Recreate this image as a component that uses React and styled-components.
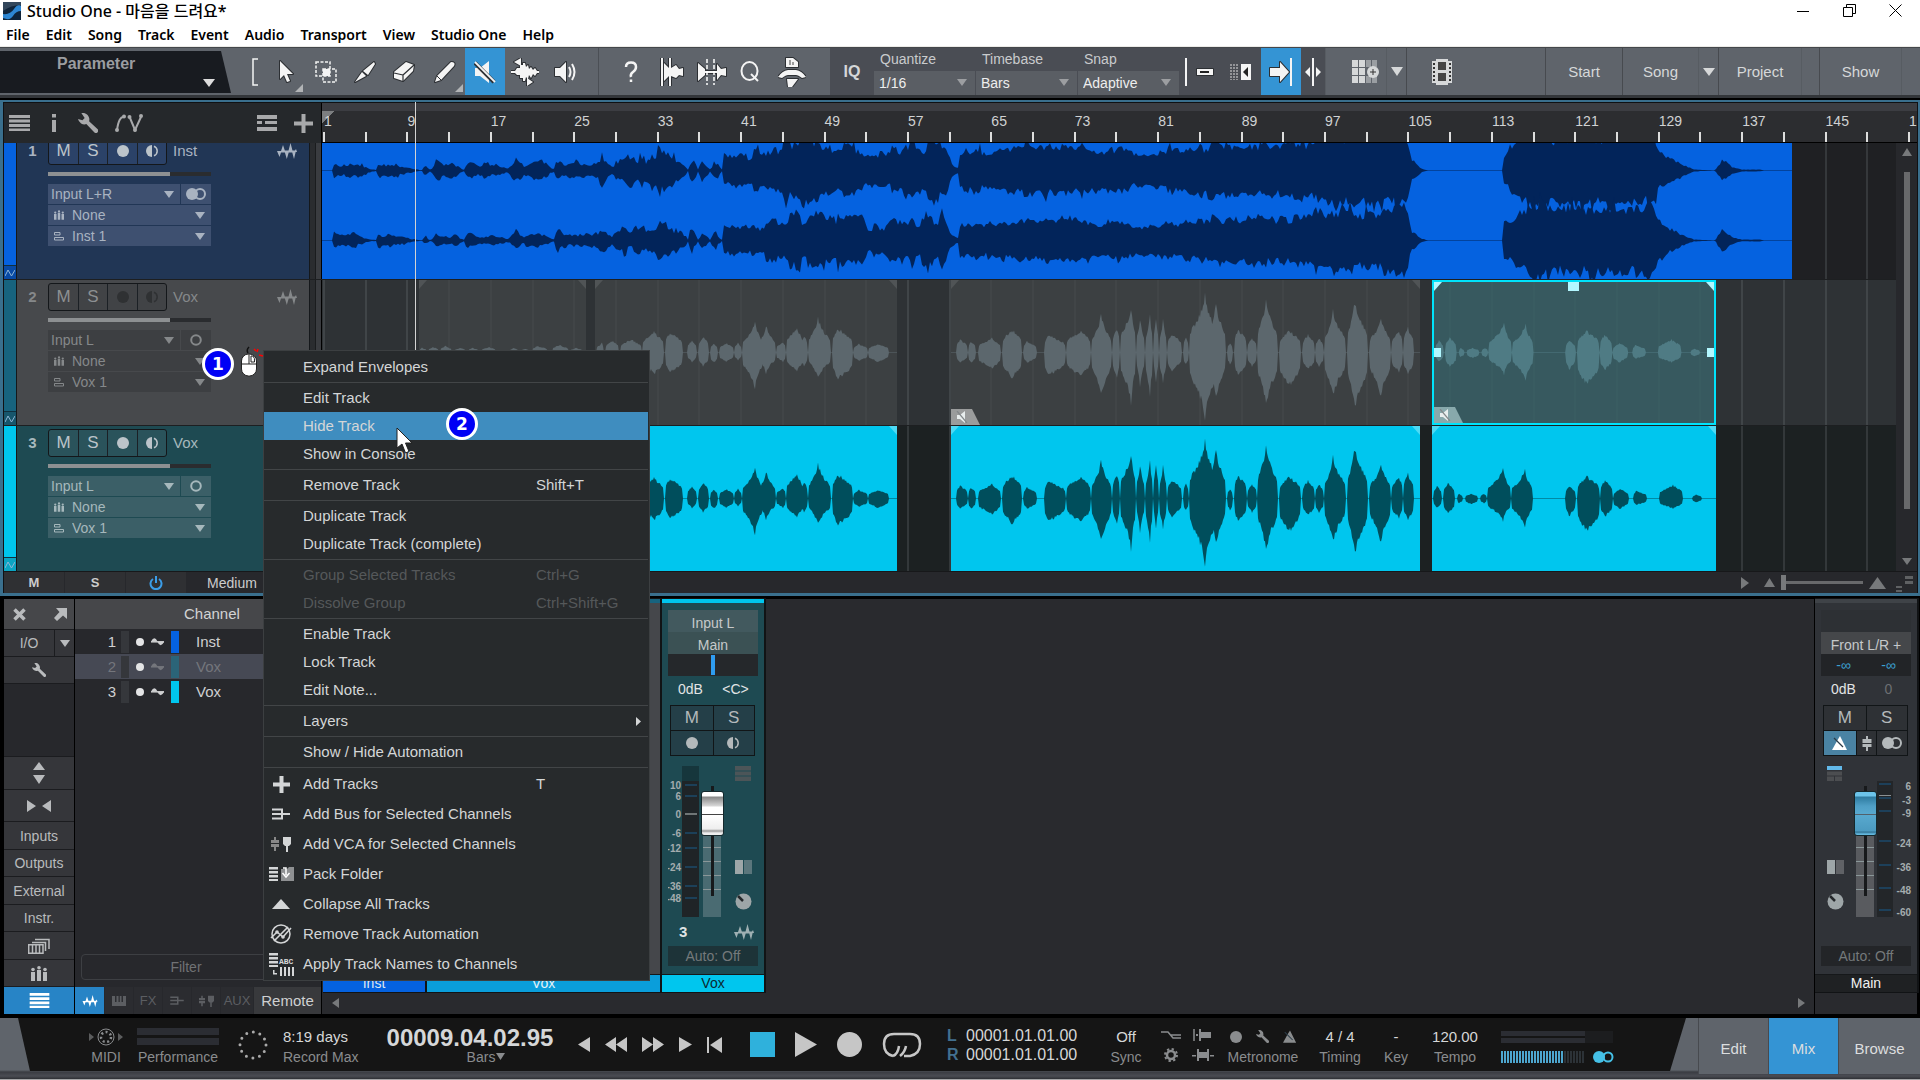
import styled, { createGlobalStyle, css } from 'styled-components'

const GlobalStyle = createGlobalStyle`
  *, *::before, *::after { box-sizing: border-box; }
  body {
    margin: 0;
    background: #000;
    color: #c9cbcc;
    font-family: "Liberation Sans", Arial, sans-serif;
    font-size: 14px;
    line-height: 16px;
  }
  button, input, select {
    font: inherit;
    color: inherit;
    margin: 0;
    padding: 0;
    border: 0;
    border-radius: 0;
    background: transparent;
    appearance: none;
    outline: none;
  }
  button { display: flex; align-items: center; justify-content: center; }
  svg { display: block; flex: none; }
`

/* ---------- waveforms ---------- */

const randomFrom = (seed) => {
  let s = seed
  return () => {
    s = (s * 16807) % 2147483647
    return s / 2147483647
  }
}

const toPath = (top, bottom) =>
  'M' + top.map((p) => p.join(' ')).join('L') + 'L' + bottom.reverse().map((p) => p.join(' ')).join('L') + 'Z'

// [x, height] envelope of the stereo instrumental
const INST = [
  [0, 0], [10, 0], [11, 11], [20, 8], [34, 9], [50, 1], [55, 1], [56, 9], [74, 6], [92, 2], [99, 0], [101, 1], [103, 8], [107, 1],
  [110, 2], [114, 12], [122, 6], [131, 8], [142, 1], [145, 9], [156, 6], [171, 8], [187, 2], [194, 15], [202, 6], [215, 12],
  [232, 2], [235, 13], [253, 8], [276, 9], [281, 18], [289, 5], [304, 16], [325, 15], [330, 25], [350, 20], [365, 4], [366, 1],
  [369, 17], [376, 1], [380, 12], [388, 1], [393, 13], [400, 1], [402, 21], [413, 14], [414, 18], [432, 20], [457, 26], [467, 32],
  [508, 32], [539, 28], [546, 16], [575, 26], [600, 27], [620, 35], [628, 12], [636, 3], [638, 20], [677, 21], [687, 25], [763, 24],
  [779, 19], [798, 24], [813, 17], [859, 22], [890, 28], [990, 30], [994, 36], [1084, 37], [1086, 30], [1089, 12], [1099, 2],
  [1106, 0], [1181, 0], [1182, 16], [1201, 33], [1206, 37], [1331, 37], [1336, 22], [1359, 7], [1372, 1], [1393, 0], [1400, 12],
  [1410, 4], [1420, 1], [1438, 1], [1442, 0], [1470, 0],
]

const instPath = (center, scale, seed) => {
  const rnd = randomFrom(seed)
  const top = []
  const bottom = []
  let k = 0
  let swell = 1
  for (let x = 0; x <= 1470; x += 2) {
    while (k < INST.length - 2 && INST[k + 1][0] < x) k++
    const [x0, a0] = INST[k]
    const [x1, a1] = INST[k + 1]
    if (x % 6 === 0) swell = (x < 640 ? 0.65 : 0.86) + (x < 640 ? 0.55 : 0.24) * rnd()
    const amp = (a0 + ((a1 - a0) * (x - x0)) / (x1 - x0)) * (x < 1060 ? scale : 1) * swell
    const floor = x < 400 ? 0.6 : 0.76
    const spike = () => floor + (1.06 - floor) * rnd() + (rnd() > 0.94 ? 0.2 : 0)
    top.push([x, (center - amp * spike()).toFixed(1)])
    bottom.push([x, (center + amp * spike()).toFixed(1)])
  }
  return toPath(top, bottom)
}

// every phrase is [start, peak, end, height above, height below]
const VOX_A = [
  [0, 3, 8, 5, 5], [9, 14, 20, 6, 6], [21, 26, 33, 7, 6], [35, 41, 47, 5, 5], [49, 54, 60, 5, 4], [62, 70, 77, 6, 5],
  [90, 95, 100, 5, 5], [101, 106, 111, 4, 4], [113, 118, 129, 7, 7], [133, 140, 150, 8, 7], [151, 157, 164, 5, 5],
]
const VOX_B = [
  [1, 7, 9, 10, 10], [10, 18, 24, 13, 12], [25, 36, 47, 14, 13], [47, 59, 69, 22, 23], [70, 75, 88, 22, 22], [92, 97, 102, 13, 10],
  [103, 108, 114, 17, 15], [115, 119, 123, 10, 11], [124, 131, 139, 10, 10], [139, 143, 147, 10, 8], [147, 160, 168, 33, 38],
  [163, 171, 181, 29, 22], [181, 188, 191, 11, 10], [191, 202, 208, 26, 20], [204, 209, 213, 18, 14], [213, 223, 236, 37, 28],
  [237, 243, 258, 26, 29], [258, 264, 273, 9, 9], [273, 283, 294, 9, 10],
]
const VOX_C = [
  [5, 9, 17, 14, 11], [17, 20, 25, 12, 11], [27, 41, 50, 15, 17], [51, 61, 71, 25, 27], [72, 76, 86, 12, 11], [93, 97, 115, 19, 25],
  [115, 130, 140, 24, 26], [140, 150, 161, 39, 47], [161, 166, 169, 26, 26], [169, 180, 185, 50, 54], [185, 189, 194, 38, 35],
  [194, 199, 202, 42, 47], [202, 205, 208, 39, 32], [208, 212, 216, 37, 35], [216, 221, 231, 20, 20], [232, 235, 238, 16, 13],
  [238, 254, 268, 60, 69], [258, 265, 275, 54, 50], [276, 279, 282, 10, 13], [283, 287, 296, 25, 25], [296, 301, 306, 15, 15],
  [306, 315, 327, 57, 57], [328, 338, 350, 24, 36], [351, 357, 364, 19, 18], [364, 368, 373, 15, 15], [373, 382, 395, 44, 48],
  [396, 404, 417, 56, 63], [418, 430, 440, 38, 48], [440, 448, 452, 23, 21], [452, 457, 463, 26, 23],
]
const VOX_D = [
  [1, 5, 10, 13, 10], [11, 16, 23, 17, 16], [25, 27, 31, 5, 5], [33, 39, 46, 5, 6], [48, 52, 55, 5, 5], [55, 71, 79, 31, 24],
  [79, 93, 101, 31, 31], [133, 137, 144, 13, 19], [145, 155, 168, 24, 36], [168, 173, 181, 20, 20], [181, 188, 197, 10, 11],
  [201, 204, 215, 8, 7], [227, 241, 251, 14, 11], [260, 264, 270, 4, 4],
]

const voxPath = (phrases, center, seed) => {
  const rnd = randomFrom(seed)
  return phrases
    .map(([start, peak, end, up, down]) => {
      const top = []
      const bottom = []
      const body = up > 28 ? 0.6 : 0.85
      for (let x = start; x <= end; x++) {
        const t = x < peak ? (x - start) / (peak - start) : (end - x) / (end - peak)
        const amp = body * Math.pow(t, 0.22) + (1 - body) * t * t * t
        top.push([x, (center - up * amp * (0.84 + 0.16 * rnd())).toFixed(1)])
        bottom.push([x, (center + down * amp * (0.84 + 0.16 * rnd())).toFixed(1)])
      }
      return toPath(top, bottom)
    })
    .join('')
}

/* ---------- icons ---------- */

const Icon = ({ w = 20, h = 20, box, ...rest }) => (
  <svg width={w} height={h} viewBox={box || `0 0 ${w} ${h}`} fill="currentColor" aria-hidden="true" {...rest} />
)
const line = { fill: 'none', stroke: 'currentColor', strokeWidth: 2 }
const edge = { stroke: '#2c2f33', strokeWidth: 2, paintOrder: 'stroke', strokeLinejoin: 'round' }

const Down = ({ w = 10, h = 7 }) => <Icon w={w} h={h}><path d={`M0 0H${w}L${w / 2} ${h}Z`} /></Icon>
const Up = ({ w = 12, h = 8 }) => <Icon w={w} h={h}><path d={`M0 ${h}H${w}L${w / 2} 0Z`} /></Icon>
const Right = ({ w = 8, h = 12 }) => <Icon w={w} h={h}><path d={`M0 0V${h}L${w} ${h / 2}Z`} /></Icon>
const Left = ({ w = 8, h = 12 }) => <Icon w={w} h={h}><path d={`M${w} 0V${h}L0 ${h / 2}Z`} /></Icon>
const Lines = ({ w = 21, h = 16 }) => (
  <Icon w={w} h={h} box="0 0 21 16"><path d="M0 0H21V3H0ZM0 4.500H21V7.500H0ZM0 9H21V12H0ZM0 13.500H21V16H0Z" /></Icon>
)
const Wrench = ({ s = 18 }) => (
  <Icon w={s} h={s} box="0 0 18 18"><path d="M3 0A6 6 0 0 1 10 7.500L17.500 14.500A1.800 1.800 0 0 1 14.800 17.500L7.500 10A6 6 0 0 1 0 5.500L4 6.500L6 4.500Z" /></Icon>
)
const Wave = ({ w = 20, h = 16 }) => (
  <Icon w={w} h={h} box="0 0 20 16"><path d="M0 8H4.500L2.500 14ZM3.500 9.500L6 2L8.500 9.500ZM7.300 7.500H12.300L9.800 16ZM11 9.500L13.500 0L16 9.500ZM14.700 7.500H19L17 16ZM17 9L19 6L20 9Z" /></Icon>
)
const Zig = () => <Icon w={10} h={8}><path d="M0 7L3 1L6.500 7L10 1" fill="none" stroke="currentColor" /></Icon>
const Dot = ({ s = 12 }) => <Icon w={s} h={s}><circle cx={s / 2} cy={s / 2} r={s / 2} /></Icon>
const Monitor = () => (
  <Icon w={13} h={12}><path d="M6 0V12A6 6 0 0 1 6 0Z" /><path d="M8 1.200A5.200 5.200 0 0 1 8 10.800" fill="none" stroke="currentColor" strokeWidth="1.500" /></Icon>
)
const Stereo = ({ w = 20, h = 12 }) => (
  <Icon w={w} h={h} box="0 0 20 12"><circle cx="6" cy="6" r="6" /><circle cx="14" cy="6" r="5" {...line} /></Icon>
)
const Mono = () => <Icon w={12} h={12}><circle cx="6" cy="6" r="4.800" {...line} /></Icon>
const Pins = ({ w = 10, h = 10 }) => (
  <Icon w={w} h={h} box="0 0 16 15">
    <path d="M0 6H4V15H0ZM6 4H10V15H6ZM12 6H16V15H12Z" /><circle cx="2" cy="3.500" r="1.800" /><circle cx="8" cy="1.800" r="1.800" /><circle cx="14" cy="3.500" r="1.800" />
  </Icon>
)
const Layers = () => <Icon w={10} h={9}><path d="M.5.5H6V3H.5ZM.5 5.500H9.500V8H.5Z" fill="none" stroke="currentColor" /></Icon>
const Bus = ({ w = 18, h = 12 }) => <Icon w={w} h={h} box="0 0 18 12"><path d="M0 1.500H10V10.500H0M0 6H18" {...line} /></Icon>
const Vca = ({ w = 20, h = 16, dim = '#888' }) => (
  <Icon w={w} h={h} box="0 0 20 16">
    <path d="M3 1H5V4H8V7H0V4H3ZM0 8H8V11H5V15H3V11H0Z" fill={dim} />
    <path d="M12 1H20V8L18 10H17V16H15V10H14L12 8Z" />
  </Icon>
)
const FaderIcon = () => <Icon w={10} h={15}><path d="M4 0H6V3H9.500V7H.5V3H4ZM.5 8H9.500V11H6V15H4V11H.5Z" /></Icon>
const Keys = () => <Icon w={14} h={10}><path d="M0 0H3V6H4.500V0H6.500V6H7.800V0H9.500V6H11V0H14V10H0Z" /></Icon>
const MutedSpeaker = ({ w = 22, h = 24 }) => (
  <Icon w={w} h={h} box="0 0 22 24"><path d="M1 8H6L15 1V23L6 16H1Z" /><path d="M1 3L20 22" stroke="#2c2f33" strokeWidth="4" /><path d="M1 2L21 22" stroke="currentColor" strokeWidth="1.800" /></Icon>
)
const MutedMark = () => <Icon w={13} h={12}><path d="M1 4H4L9 0V12L4 8H1Z" /><path d="M1 0L11 12" stroke="#83888a" strokeWidth="1.200" /></Icon>
const Sine = () => <Icon w={13} h={8}><path d="M0 3.500Q3.500-3 6.500 3.500ZM6.500 4Q9.500 10.500 13 4Z" /><path d="M0 3.800H13" stroke="currentColor" strokeWidth="1.500" /></Icon>
const Panes = ({ dim }) => <Icon w={17} h={14}><path d="M0 0H8V14H0Z" /><path d="M9 0H17V14H9Z" fill={dim} /></Icon>
const Knob = () => <Icon w={17} h={17}><circle cx="8.500" cy="8.500" r="8" /><path d="M3 3L8 8" stroke="#25282b" strokeWidth="2.500" /></Icon>
const MetronomeIcon = ({ w = 16, h = 14 }) => (
  <Icon w={w} h={h} box="0 0 16 14"><path d="M8 0L15 14H0L5 5Z" /><path d="M2 2L11 11" stroke="#2b3c48" strokeWidth="1.200" /></Icon>
)

/* ---------- window frame ---------- */

const Page = styled.div`
  position: relative;
  display: flex;
  flex-direction: column;
  min-height: 100vh;
  overflow: hidden;
`
const TitleBar = styled.header`
  display: flex;
  align-items: center;
  height: 21px;
  padding: 0 2px 0 3px;
  background: #fff;
  color: #000;
  font-family: "Noto Sans", "Noto Sans CJK KR", sans-serif;
  font-size: 16px;
  font-weight: 500;
`
const Title = styled.h1`
  margin: 0 0 0 6px;
  flex: 1;
  font: inherit;
`
const WindowButton = styled.button`
  width: 46px;
  height: 20px;
`
const MenuBar = styled.nav`
  display: flex;
  gap: 16px;
  height: 26px;
  padding: 5px 7px 0 6px;
  border-bottom: 1px solid #ecebe8;
  background: #fff;
  color: #000;
  font-family: "Noto Sans", "Open Sans", sans-serif;
  font-size: 14px;
  font-weight: 600;
`
const MenuButton = styled.button`
  height: 18px;
  line-height: 18px;
`

/* ---------- toolbar ---------- */

const Toolbar = styled.div`
  display: flex;
  height: 51px;
  border-top: 1px solid #44474b;
  border-bottom: 3px solid #33363a;
  background: #5f646b;
  color: #f4f4f4;
`
const ParameterBox = styled.div`
  display: grid;
  width: 231px;
  height: 42px;
  margin: 3px 16px 0 0;
  padding: 5px 16px 0 57px;
  background: #181b20;
  clip-path: polygon(0 0, 221px 0, 231px 100%, 0 100%);
  color: #9b9da0;
  font-size: 16px;
  font-weight: bold;
  svg { justify-self: end; color: #ddd; }
`
const Tool = styled.button`
  position: relative;
  width: ${(p) => p.$w || 40}px;
  background: ${(p) => (p.$on ? '#3494d4' : 'transparent')};
  &::after {
    content: "";
    display: ${(p) => (p.$more ? 'block' : 'none')};
    position: absolute;
    right: 2px;
    bottom: 3px;
    border: 4px solid;
    border-color: transparent #b2b4b6 #b2b4b6 transparent;
  }
`
const Gap = styled.i`
  width: ${(p) => p.$w}px;
  border-right: ${(p) => (p.$line ? '1px solid #4b4f55' : '0')};
`
const DarkGroup = styled.div`
  display: flex;
  background: #4a4d54;
`
const SelectField = styled.label`
  position: relative;
  display: grid;
  grid-template-rows: 23px 24px;
  width: 102px;
  border-right: 1px solid #4a4d54;
  color: #c9cbcd;
  span { padding: 3px 6px; }
  select { padding: 0 5px; background: #5a5e64; color: #eee; }
  svg { position: absolute; right: 8px; bottom: 9px; color: #9c9ea1; }
`
const PageButtons = styled.div`
  display: flex;
  flex: 1;
  justify-content: flex-end;
`
const PageButton = styled.button`
  width: ${(p) => p.$w}px;
  padding: 0 ${(p) => p.$right || 0}px 0 ${(p) => p.$left || 0}px;
  border-left: 1px solid ${(p) => (p.$soft ? '#575c62' : '#474a4f')};
  color: #d6d8d9;
  font-size: 15px;
`

/* ---------- arrangement ---------- */

const Arrange = styled.main`
  position: relative;
  margin-top: 2px;
  padding: 1px 1px 0;
  border: 2px solid #3a6f8d;
  border-width: 2px 2px 3px 3px;
  background: #101113;
`
const Split = styled.div`
  display: grid;
  grid-template-columns: 318px minmax(0, 1fr);
`
const ListTools = styled.div`
  display: flex;
  align-items: center;
  height: 40px;
  padding: 0 8px 0 5px;
  border-right: 1px solid #000;
  background: #25282b;
  color: #a8a9ab;
  button { margin-right: 17px; }
  button:last-child { margin-right: 0; }
`
const Spacer = styled.i`
  flex: ${(p) => (p.$w ? `0 0 ${p.$w}px` : 1)};
`
const ruled = css`
  display: grid;
  grid-template-columns: repeat(38, minmax(0, 1fr)) 9px;
  padding-left: 1px;
`
const Ruler = styled.div`
  ${ruled}
  height: 40px;
  overflow: hidden;
  border-top: 8px solid #3c3d42;
  border-bottom: 1px solid #000;
  background: linear-gradient(135deg, #7c7e80 9px, transparent 9px) no-repeat #2c2d30;
`
const Bar = styled.div`
  padding: 2px 0 0 1px;
  background: linear-gradient(#ddd, #ddd) no-repeat 0 100% / 2px 10px;
  color: #d0d2d3;
  white-space: nowrap;
`
const Tracks = styled.div`
  position: relative;
  display: grid;
  grid-template-columns: minmax(0, 1fr) 21px;
  height: 428px;
  overflow: hidden;
`
const TrackList = styled.div`
  margin-top: -9px;
`
const tones = {
  blue: { strip: '#0562e0', end: '#084aa5', body: '#213655', field: '#3e5070', button: '#2b4268', lane: '#1f2023', text: '#a9b3c1' },
  gray: { strip: '#17637e', end: '#17566c', body: '#47494c', field: '#3d3f42', button: '#414346', lane: '#2e3235', text: '#85888a', off: true },
  cyan: { strip: '#00c6ee', end: '#0ba5c3', body: '#1e4a52', field: '#3b5f67', button: '#2a535b', lane: '#1c2122', text: '#a6b8bc' },
}
const Track = styled.section`
  display: grid;
  grid-template-columns: 12px 294px 12px minmax(0, 1fr);
  height: 146px;
  border-bottom: 1px solid #1d1f21;
`
const ColorStrip = styled.div`
  display: flex;
  flex-direction: column;
  justify-content: flex-end;
  background: ${(p) => p.$tone.strip};
  color: #8fb6d6;
  button {
    height: 14px;
    border-top: 1px solid #10303f;
    background: ${(p) => p.$tone.end};
  }
`
const TrackHead = styled.div`
  display: grid;
  grid-template-columns: 31px 163px 1fr;
  grid-template-rows: 28px 18px auto;
  padding-top: 3px;
  border: 1px solid #15181b;
  border-width: 0 1px;
  background: ${(p) => p.$tone.body};
  color: ${(p) => p.$tone.text};
`
const TrackNumber = styled.b`
  align-self: center;
  justify-self: center;
  font-size: 15px;
`
const TrackButtons = styled.div`
  display: grid;
  grid-template-columns: 29px 29px 30px 29px;
  width: 119px;
  height: 28px;
  border: 1px solid #14171a;
  border-radius: 3px;
  background: ${(p) => p.$tone.button};
  color: ${(p) => (p.$tone.off ? '#8d9092' : '#bcc4ca')};
  button { font-size: 17px; line-height: 14px; }
  button + button { border-left: 1px solid #1b2025; }
  button:nth-child(n + 3) { color: ${(p) => (p.$tone.off ? '#2f3133' : '#bcc4ca')}; }
`
const TitleCell = styled.div`
  display: flex;
  align-items: center;
  justify-content: space-between;
  margin-left: -38px;
  padding-right: 12px;
  font-size: 15px;
`
const Volume = styled.input`
  grid-column: 2;
  align-self: center;
  width: 163px;
  height: 4px;
  background: linear-gradient(90deg, #8d9092 75%, #2a2c2f 75%);
  &::-webkit-slider-thumb { appearance: none; width: 0; height: 4px; }
`
const Fields = styled.div`
  grid-column: 2;
  display: grid;
  gap: 1px;
  align-content: start;
  padding-top: 1px;
`
const Field = styled.label`
  position: relative;
  display: flex;
  align-items: center;
  gap: 8px;
  height: 20px;
  padding-left: ${(p) => (p.$icon ? 6 : 3)}px;
  background: ${(p) => p.$tone.field};
  select { flex: 1; min-width: 0; }
  > svg:last-child { position: absolute; right: 6px; }
`
const InputRow = styled.div`
  display: grid;
  grid-template-columns: 132px 30px;
  gap: 1px;
  button { background: ${(p) => p.$tone.field}; }
`
const Gutter = styled.div`
  border-right: 1px solid #000;
  background: linear-gradient(90deg, #2a2c2f 5px, #1a1c1e 5px, #1a1c1e 6px, #3a3c40 6px);
`
const Lane = styled.div`
  position: relative;
  display: grid;
  grid-template-columns: ${(p) => p.$columns};
  overflow: hidden;
  background: ${(p) => p.$tone.lane};
`
const GridLines = styled.div`
  ${ruled}
  position: absolute;
  inset: 0 -21px 0 0;
  i { border-left: 2px solid rgba(120, 126, 130, 0.25); }
`
const Clip = styled.div`
  position: relative;
  overflow: hidden;
  grid-column: ${(p) => p.$column};
  border: ${(p) => (p.$selected ? '2px solid #00e3fb' : '0')};
  background: ${(p) => p.$bg};
  color: ${(p) => p.$wave};
  > svg:first-child { width: 100%; height: 100%; }
`
const Corner = styled.i`
  position: absolute;
  top: 0;
  ${(p) => p.$side}: 0;
  border-top: 9px solid ${(p) => p.$color};
  border-${(p) => (p.$side === 'left' ? 'right' : 'left')}: 8px solid transparent;
`
const Handle = styled.i`
  position: absolute;
  width: ${(p) => (p.$at === 'top' ? 11 : 7)}px;
  height: 9px;
  background: #b3f7ff;
  ${(p) => (p.$at === 'top' ? 'top: 0; left: calc(50% - 6px);' : `top: calc(50% - 5px); ${p.$at}: 0;`)}
`
const MuteFlag = styled.div`
  position: absolute;
  left: 0;
  bottom: 0;
  display: flex;
  align-items: center;
  width: 29px;
  height: 16px;
  padding-left: 5px;
  background: ${(p) => p.$bg};
  clip-path: polygon(0 0, 21px 0, 100% 100%, 0 100%);
  color: #e8eeee;
`
const Playhead = styled.div`
  position: absolute;
  top: 0;
  bottom: 0;
  left: 412px;
  width: 1px;
  background: #d3d3d3;
`
const ScrollColumn = styled.div`
  display: flex;
  flex-direction: column;
  align-items: center;
  justify-content: space-between;
  padding: 5px 0 7px;
  background: #27282c;
  color: #77797b;
`
const Thumb = styled.div`
  width: 6px;
  height: 337px;
  margin-bottom: 33px;
  background: #68696b;
`
const ArrangeFoot = styled.div`
  display: flex;
  align-items: center;
  height: 22px;
  background: #27282c;
  color: #77797b;
  border-top: 1px solid #17181a;
`
const FootButton = styled.button`
  width: ${(p) => p.$w || 60}px;
  height: 21px;
  margin-right: 1px;
  background: ${(p) => (p.$plain ? 'transparent' : '#2f3033')};
  color: ${(p) => p.$color || '#ccc'};
  font-size: ${(p) => (p.$plain ? 14 : 13)}px;
  font-weight: ${(p) => (p.$plain ? 'normal' : 'bold')};
`
const Zoom = styled.input`
  width: 82px;
  height: 16px;
  margin: 0 6px 0 6px;
  background: linear-gradient(#68696b, #68696b) no-repeat 0 50% / 100% 3px;
  &::-webkit-slider-thumb { appearance: none; width: 5px; height: 15px; background: #77797b; }
`

/* ---------- mixer ---------- */

const Mixer = styled.section`
  display: grid;
  grid-template-columns: 70px 246px minmax(0, 1fr) 102px;
  gap: 1px;
  flex: 1;
  min-height: 415px;
  margin: 3px 3px 0 4px;
`
const SideNav = styled.div`
  display: flex;
  flex-direction: column;
  gap: 1px;
  background: #1b1c1f;
`
const SideButton = styled.button`
  min-width: 0;
  height: ${(p) => p.$h || 26}px;
  background: ${(p) => (p.$on ? '#2784c6' : '#35363a')};
  color: ${(p) => (p.$on ? '#fff' : '#b9bbbd')};
`
const SideHeader = styled.div`
  display: flex;
  align-items: center;
  justify-content: space-between;
  height: 30px;
  padding: 0 7px 0 9px;
  background: #46474a;
  color: #b9bbbd;
`
const SideRow = styled.div`
  display: grid;
  grid-template-columns: 50px 1fr;
  gap: 1px;
`
const SideGap = styled.div`
  flex: 1;
  background: #27282c;
`
const ChannelPanel = styled.div`
  display: flex;
  flex-direction: column;
  background: #27282c;
`
const ChannelTable = styled.table`
  width: 100%;
  border-collapse: collapse;
  font-size: 15px;
  th {
    height: 30px;
    padding: 0 0 0 109px;
    background: #46474a;
    color: #d2d3d4;
    font-weight: normal;
    text-align: left;
  }
  td { height: 25px; padding: 0; vertical-align: middle; }
  td:first-child { width: 41px; text-align: right; }
  td:last-child { width: 125px; }
`
const ChannelRow = styled.tr`
  background: ${(p) => (p.$selected ? '#464954' : 'transparent')};
  color: ${(p) => (p.$selected ? '#74767c' : '#cfd0d1')};
`
const ChannelMarks = styled.div`
  display: grid;
  grid-template-columns: 8px 8px 13px 8px;
  gap: 7px;
  align-items: center;
  height: 22px;
  margin-left: 5px;
  svg:first-of-type { color: #e4e5e6; }
`
const Swatch = styled.i`
  height: 22px;
  background: ${(p) => p.$color};
`
const Filter = styled.input`
  width: 210px;
  height: 26px;
  margin: auto 0 7px 6px;
  border: 1px solid #3d3f43;
  border-radius: 4px;
  text-align: center;
  &::placeholder { color: #707275; }
`
const TypeTabs = styled.div`
  display: grid;
  grid-template-columns: 29px repeat(4, 28px) 32px 1fr;
  gap: 1px;
  height: 27px;
`
const TypeTab = styled.button`
  background: ${(p) => (p.$on ? '#2784c6' : p.$wide ? '#38393c' : '#2b2c30')};
  color: ${(p) => (p.$on ? '#fff' : p.$wide ? '#cfd0d1' : '#5c5e62')};
  font-size: ${(p) => (p.$wide ? 15 : 13)}px;
`
const Console = styled.div`
  display: flex;
  flex-direction: column;
  background: #292a2e;
`
const Strips = styled.div`
  display: flex;
  gap: 2px;
  padding-left: 1px;
`
const Strip = styled.div`
  display: flex;
  flex-direction: column;
  width: ${(p) => p.$w || 102}px;
  height: 393px;
  border-top: 4px solid ${(p) => p.$top};
  background: ${(p) => p.$bg};
  box-shadow: 1px 0 0 1px #111315;
`
const StripBody = styled.div`
  flex: 1;
  display: flex;
  flex-direction: column;
  padding: 7px 6px 8px;
`
const Slot = styled.button`
  width: 100%;
  height: 22px;
  padding-top: 3px;
  background: ${(p) => p.$bg};
  color: #c6c9ca;
`
const Pair = styled.div`
  display: grid;
  grid-template-columns: 1fr 1fr;
  place-items: center;
  height: ${(p) => p.$h || 22}px;
  padding-bottom: ${(p) => (p.$h ? 4 : 0)}px;
  background: ${(p) => p.$bg || 'transparent'};
  color: ${(p) => p.$color || '#e2e4e5'};
`
const Faint = styled.span`
  color: #6c6f72;
`
const Pan = styled.div`
  height: 22px;
  background: linear-gradient(#2f9df0, #2f9df0) no-repeat 50% 50% / 4px 20px #25282b;
`
const Buttons = styled.div`
  display: grid;
  grid-template-columns: ${(p) => p.$columns};
  margin: 0 3px 0 2px;
  border: 1px solid #111517;
  border-top-width: ${(p) => (p.$second ? 0 : 1)}px;
  background: ${(p) => p.$bg};
  color: #b4b9bb;
  button { height: 24px; font-size: 17px; }
  button + button { border-left: 1px solid #111517; }
`
const BlueButton = styled.button`
  background: #4a83a3;
  color: #fff;
`
const FaderArea = styled.div`
  display: flex;
  height: 151px;
  margin-top: 10px;
  margin-right: ${(p) => (p.$main ? -5 : 0)}px;
  color: #9ea6a8;
`
const FaderIcons = styled.div`
  display: flex;
  flex-direction: column;
  width: 17px;
  margin-left: ${(p) => (p.$main ? 6 : 11)}px;
  margin-right: ${(p) => (p.$main ? 9 : 0)}px;
  svg + svg { margin-top: 79px; }
  svg + svg + svg { margin-top: 19px; }
`
const Fader = styled.input`
  align-self: flex-end;
  width: 24px;
  height: 131px;
  writing-mode: vertical-lr;
  direction: rtl;
  background:
    linear-gradient(#17191b, #17191b) no-repeat 50% 0 / 3px 110px,
    repeating-linear-gradient(${(p) => p.$track} 0 13px, #8a9799 13px 14px) no-repeat 50% 34px / 18px 74px,
    linear-gradient(${(p) => p.$track}, ${(p) => p.$track}) no-repeat 50% 100% / 18px 90px;
  &::-webkit-slider-thumb {
    appearance: none;
    width: 23px;
    height: 45px;
    border: 1px solid #15282c;
    border-radius: 3px;
    background: ${(p) => p.$cap};
  }
`
const StripFoot = styled.div`
  display: flex;
  align-items: center;
  justify-content: space-between;
  height: 29px;
  padding: 0 4px 0 11px;
  color: #dfe3e4;
  font-size: 15px;
  svg { color: #9fb0b3; }
`
const AutoMode = styled.button`
  height: 20px;
  background: ${(p) => p.$bg};
  color: #74797b;
`
const StripName = styled.div`
  height: 18px;
  border-top: 1px solid #16181a;
  background: ${(p) => p.$bg};
  color: ${(p) => p.$color};
  text-align: center;
`
const ScrollRow = styled.div`
  display: flex;
  flex: 1;
  align-items: center;
  justify-content: space-between;
  padding: 0 9px 0 10px;
  color: #77797b;
`
const HiddenBody = styled.div`
  flex: 1;
  border-right: 10px solid #45474b;
  background: #37383c;
`

/* ---------- transport ---------- */

const Transport = styled.footer`
  display: flex;
  height: 62px;
  margin-top: 4px;
  padding-bottom: 6px;
  border-bottom: 1px solid #a5a6a8;
  background: linear-gradient(#5f646b 52px, #3a3c42 54px, #4a4c53 58px, #25262a 62px);
`
const TransportPanel = styled.div`
  display: flex;
  align-items: center;
  flex: 1;
  max-width: 1686px;
  height: 53px;
  padding-left: 84px;
  background: #151515;
  clip-path: polygon(18px 0, 100% 0, calc(100% - 16px) 100%, 30px 100%);
  color: #8a8c8e;
`
const Readout = styled.div`
  display: grid;
  grid-template-rows: 20px 20px;
  align-items: center;
  justify-items: ${(p) => p.$align || 'center'};
  width: ${(p) => p.$w}px;
  margin-right: ${(p) => p.$gap || 0}px;
  padding-top: 4px;
`
const Value = styled.span`
  color: #d5d7d8;
  font-size: ${(p) => p.$size || 15}px;
`
const Clock = styled.b`
  padding-top: 3px;
  color: #d5d7d8;
  font-size: 24px;
`
const Meter = styled.div`
  width: ${(p) => p.$w}px;
  height: 17px;
  border: 7px solid #2b2d33;
  border-width: 7px 0;
  background: #151515;
`
const BarsMode = styled.button`
  gap: 1px;
  padding-left: 32px;
`
const TransportButtons = styled.div`
  display: flex;
  align-items: center;
  gap: ${(p) => p.$gap}px;
  margin-right: ${(p) => p.$after}px;
  color: #c6c6c6;
`
const Locators = styled.div`
  display: grid;
  grid-template-columns: 19px 112px;
  line-height: 19px;
  margin-right: 26px;
  color: #d5d7d8;
  font-size: 16px;
  b { color: #42708f; }
`
const SmallIcons = styled.div`
  display: grid;
  grid-template-columns: 22px 22px;
  grid-template-rows: 20px 20px;
  gap: 0 10px;
  place-items: center;
  width: 54px;
  margin-right: 13px;
`
const IconRow = styled.div`
  display: flex;
  align-items: center;
  gap: 14px;
`
const ViewTabs = styled.div`
  display: grid;
  grid-template-columns: 70px 70px 82px;
  margin-left: auto;
`
const ViewTab = styled.button`
  height: 56px;
  padding-top: 6px;
  border-left: 1px solid #474a4f;
  background: ${(p) => (p.$on ? '#3494d4' : '#5f646b')};
  color: #dcdedf;
  font-size: 15px;
`

/* ---------- context menu ---------- */

const ContextMenu = styled.div`
  position: absolute;
  top: 350px;
  left: 263px;
  width: 387px;
  padding: 2px 1px 1px 0;
  border: 1px solid #3c3f41;
  background: #272a2c;
  font-size: 15px;
`
const MenuItem = styled.button`
  display: grid;
  grid-template-columns: 39px 233px 1fr 12px;
  align-items: center;
  justify-items: start;
  width: 100%;
  height: ${(p) => (p.$tall ? 30 : 28)}px;
  background: ${(p) => (p.$on ? '#3f8dbf' : 'transparent')};
  color: ${(p) => (p.disabled ? '#55585a' : '#d4d6d7')};
  text-align: left;
  > svg:first-child { justify-self: center; margin-right: 5px; }
`
const Separator = styled.hr`
  height: 3px;
  margin: 0;
  border: 1px solid #272a2c;
  border-width: 1px 0;
  background: #424547;
`
const Badge = styled.div`
  position: absolute;
  top: ${(p) => p.$y}px;
  left: ${(p) => p.$x}px;
  display: grid;
  place-items: center;
  width: 32px;
  height: 32px;
  border: 3px solid #fff;
  border-radius: 50%;
  background: #0000f5;
  color: #fff;
  font-family: "DejaVu Sans", sans-serif;
  font-size: 17px;
  font-weight: bold;
`
const Pointer = styled.div`
  position: absolute;
  top: ${(p) => p.$y}px;
  left: ${(p) => p.$x}px;
`

/* ---------- parts ---------- */

const MENUS = ['File', 'Edit', 'Song', 'Track', 'Event', 'Audio', 'Transport', 'View', 'Studio One', 'Help']

const ToolSelect = ({ label, value }) => (
  <SelectField>
    <span>{label}</span>
    <select defaultValue={value}><option>{value}</option></select>
    <Down w={10} h={7} />
  </SelectField>
)

const FieldSelect = ({ label, value, tone, icon }) => (
  <Field $tone={tone} $icon={!!icon}>
    {icon}
    <select aria-label={label} defaultValue={value}><option>{value}</option></select>
    <Down w={10} h={7} />
  </Field>
)

const TrackRow = ({ number, name, tone, input, output, stereo, columns, children }) => (
  <Track>
    <ColorStrip $tone={tone}><button aria-label={`Expand envelopes ${number}`}><Zig /></button></ColorStrip>
    <TrackHead $tone={tone}>
      <TrackNumber>{number}</TrackNumber>
      <TrackButtons $tone={tone}>
        <button>M</button>
        <button>S</button>
        <button aria-label="Record"><Dot /></button>
        <button aria-label="Monitor"><Monitor /></button>
      </TrackButtons>
      <TitleCell>{name}<Wave /></TitleCell>
      <Volume type="range" defaultValue="75" aria-label={`Volume ${number}`} />
      <Fields>
        <InputRow $tone={tone}>
          <FieldSelect label="Input" value={input} tone={tone} />
          <button aria-label="Channel mode">{stereo ? <Stereo /> : <Mono />}</button>
        </InputRow>
        <FieldSelect label="Group" value="None" tone={tone} icon={<Pins />} />
        <FieldSelect label="Layer" value={output} tone={tone} icon={<Layers />} />
      </Fields>
    </TrackHead>
    <Gutter />
    <Lane $tone={tone} $columns={columns}>
      <GridLines>{Array.from({ length: 39 }, (_, i) => <i key={i} />)}</GridLines>
      {children}
    </Lane>
  </Track>
)

const VOX_COLUMNS = '97fr 167fr 9fr 302fr 54fr 469fr 12fr 284fr 180fr'
const VOX_CLIPS = [
  { column: 2, width: 167, data: VOX_A },
  { column: 4, width: 302, data: VOX_B },
  { column: 6, width: 469, data: VOX_C },
  { column: 8, width: 284, data: VOX_D },
]

const VoxClip = ({ clip, muted }) => {
  const selected = muted && clip.column === 8
  const bg = selected ? 'rgba(56, 96, 102, 0.85)' : muted ? 'rgba(66, 69, 71, 0.75)' : '#00c6ee'
  const wave = selected ? '#4f7b84' : muted ? '#5c676d' : '#004e5c'
  const corner = selected ? '#b3f7ff' : muted ? '#505456' : '#4ddaf5'
  return (
    <Clip $column={clip.column} $bg={bg} $wave={wave} $selected={selected}>
      <svg viewBox={`0 0 ${clip.width} 145`} preserveAspectRatio="none" fill="currentColor">
        <path d={`M0 72.5H${clip.width}`} stroke="currentColor" strokeOpacity=".5" />
        <path d={voxPath(clip.data, 72.5, clip.width)} />
      </svg>
      <Corner $side="left" $color={corner} />
      <Corner $side="right" $color={corner} />
      {muted && clip.width > 302 && <MuteFlag $bg="#9a9c9c"><MutedMark /></MuteFlag>}
      {selected && (
        <>
          <MuteFlag $bg="#88a9ac"><MutedMark /></MuteFlag>
          <Handle $at="top" /><Handle $at="left" /><Handle $at="right" />
        </>
      )}
    </Clip>
  )
}

const Scale = ({ marks, main }) => (
  <svg width={main ? 36 : 32} height="151" fontSize="10" fontWeight="bold" fill="#a4acae">
    <rect x={main ? 0 : 14} y={main ? 15 : 0} width={main ? 16 : 17} height={main ? 136 : 151} fill={main ? '#232629' : '#16363c'} />
    {!main && <rect x="14" y="15" width="17" height="136" fill="#1f2427" />}
    {main && <path d="M2 29.500H14" stroke="#8b9092" />}
    {marks.map(([text, y]) => (
      <g key={y}>
        <path d={main ? `M2 ${y - 2}H14` : `M17 ${y}H29`} stroke={text === '0' ? '#8b9092' : '#1d4a6b'} strokeWidth="1.500" />
        <text x={main ? 34 : 13} y={y + 4} textAnchor="end">{text}</text>
      </g>
    ))}
  </svg>
)

const CHANNELS = [
  { number: 1, name: 'Inst', color: '#0562e0' },
  { number: 2, name: 'Vox', color: '#2b6478', selected: true },
  { number: 3, name: 'Vox', color: '#00c6ee' },
]

const MENU = [
  ['Expand Envelopes'], null,
  ['Edit Track'], ['Hide Track', '', 'on'], ['Show in Console'], null,
  ['Remove Track', 'Shift+T'], null,
  ['Duplicate Track'], ['Duplicate Track (complete)'], null,
  ['Group Selected Tracks', 'Ctrl+G', 'off'], ['Dissolve Group', 'Ctrl+Shift+G', 'off'], null,
  ['Enable Track'], ['Lock Track'], ['Edit Note...'], null,
  ['Layers', '', 'sub'], null,
  ['Show / Hide Automation'], null,
]

const ICON_MENU = [
  ['Add Tracks', <Icon w={17} h={17}><path d="M6.500 0H10.500V6.500H17V10.500H10.500V17H6.500V10.500H0V6.500H6.500Z" /></Icon>, 'T'],
  ['Add Bus for Selected Channels', <Bus />],
  ['Add VCA for Selected Channels', <Vca />],
  ['Pack Folder', <Icon w={25} h={14}><path d="M0 0H9V2.500H0ZM0 4H9V6.500H0ZM0 8H9V10.500H0ZM0 12H9V14H0Z" /><path d="M12 2H18L20 0H25V14H12Z" opacity=".6" /><path d="M14 1H17V8M13.500 6L17 10L20.500 6" fill="none" stroke="#fff" strokeWidth="1.500" /></Icon>],
  ['Collapse All Tracks', <Up w={18} h={10} />],
  ['Remove Track Automation', <Icon w={22} h={20}><circle cx="11" cy="10" r="9" fill="none" stroke="currentColor" strokeWidth="1.500" /><path d="M1 14L7 8L13 13L21 4M4 17L18 3" fill="none" stroke="currentColor" strokeWidth="1.600" /><circle cx="7" cy="8" r="1.800" /><circle cx="13" cy="13" r="1.800" /></Icon>],
  ['Apply Track Names to Channels', <Icon w={25} h={23}><path d="M0 0H9V2.500H0ZM0 4H9V6.500H0ZM0 8H9V10.500H0ZM0 12H9V14H0ZM4 17H5.500V20H8V21.500H4ZM11 14H13V23H11ZM15 14H17V23H15ZM19 14H21V23H19ZM23 14H25V23H23Z" /><text x="10" y="11" fontSize="8" fontWeight="bold" fontFamily="Liberation Mono">ABC</text></Icon>],
]

const WHITE_CAP = 'linear-gradient(#fff 4px, #888 5px, #d8d8d8 14px, #fff 15px, #fff 22px, #444 22px, #444 23px, #fff 23px, #eee 37px, #999 39px, #eee 41px)'
const BLUE_CAP = 'linear-gradient(#6cc4ea 4px, #2e7ba0 5px, #4f9fc6 14px, #58a9cf 22px, #52606a 22px, #52606a 23px, #58a9cf 23px, #4b9ac0 39px, #2e6f90 40px, #62b7dd 42px)'

const App = () => (
  <Page>
    <GlobalStyle />
    <TitleBar>
      <Icon w={18} h={18}><path d="M0 0H18V18H0Z" fill="#10243a" /><path d="M0 12Q7 13 11 7T18 4V9Q13 9 10 14T0 16Z" fill="#2e86d2" /><path d="M0 0H18V3Q8 3 0 9Z" fill="#33475c" /></Icon>
      <Title>Studio One - 마음을 드려요*</Title>
      <WindowButton aria-label="Minimize"><Icon w={12} h={12}><path d="M0 6.500H12" stroke="#000" /></Icon></WindowButton>
      <WindowButton aria-label="Restore"><Icon w={13} h={13}><path d="M.5 3.500H9.500V12.500H.5ZM3.500 3V.5H12.500V9.500H10" fill="none" stroke="#000" /></Icon></WindowButton>
      <WindowButton aria-label="Close"><Icon w={13} h={13}><path d="M.5.5L12.500 12.500M12.500.5L.5 12.500" stroke="#000" /></Icon></WindowButton>
    </TitleBar>
    <MenuBar>{MENUS.map((m) => <MenuButton key={m}>{m}</MenuButton>)}</MenuBar>

    <Toolbar>
      <ParameterBox>Parameter<Down w={12} h={8} /></ParameterBox>
      <Tool $w={16} aria-label="Tool group"><Icon w={8} h={28}><path d="M7 1H2V27H7" {...line} strokeWidth="1.500" /></Icon></Tool>
      <Gap $w={4} />
      <Tool $more $w={38} aria-label="Arrow"><Icon w={16} h={24} {...edge}><path d="M2 1V19L6 15L9 22L12 21L9 14H15Z" /></Icon></Tool>
      <Tool $w={42} aria-label="Range"><Icon w={22} h={22}><path d="M1 1H15V15H1ZM8 8H21V21H8Z" {...line} strokeWidth="1.500" strokeDasharray="3 1.500" /><path d="M8 8H15V15H8Z" /></Icon></Tool>
      <Tool $w={36} aria-label="Split"><Icon w={22} h={22} {...edge}><path d="M20 1L21 3L14 14L9 10ZM8 11L12 15L1 21Z" /></Icon></Tool>
      <Tool $w={42} aria-label="Eraser"><Icon w={22} h={22} {...edge}><path d="M13 1L21 4L20 10L10 20L1 17V11Z" /><path d="M1 12L10 14L21 4M10 14V20" fill="none" stroke="#2c2f33" strokeWidth="1.200" /></Icon></Tool>
      <Tool $more $w={40} aria-label="Paint"><Icon w={22} h={22} {...edge}><path d="M17 1Q22 1 20 5L7 19L1 21L3 15Z" /><path d="M3 15L7 19" stroke="#2c2f33" strokeWidth="1" /></Icon></Tool>
      <Tool $on aria-label="Mute"><MutedSpeaker /></Tool>
      <Tool aria-label="Bend"><Icon w={28} h={28} {...edge}><path d="M0 13H4L6 10H9V7H12V5H14L15 9L17 7L18 11L20 9L22 12L24 10L26 13H28V15H26L24 18L22 16L20 20L18 17L17 21L15 19L14 23H12V20H9V17H6L4 15H0ZM3 4L10 0V8ZM16 20L22 24L16 28Z" /></Icon></Tool>
      <Tool $w={42} aria-label="Listen"><Icon w={24} h={22} {...edge}><path d="M1 7H6L12 1V21L6 15H1Z" /><path d="M15 6Q18 11 15 16M18 3Q23 11 18 19" {...line} /></Icon></Tool>
      <Gap $w={12} $line />
      <Gap $w={11} />
      <Tool $w={42} aria-label="Help"><Icon w={14} h={22} {...line} strokeWidth="2.500"><path d="M2 6Q2 1.500 7 1.500T12 6Q12 9 9 11T7 16M7 18.500V21" /></Icon></Tool>
      <Tool aria-label="Strip silence"><Icon w={24} h={28} {...edge}><path d="M1 0H3V28H1ZM4 5L9 10V0H11V10L16 7L19 11L23 10V18L19 17L16 20L11 18V28H9V18L4 23Z" /></Icon></Tool>
      <Tool aria-label="Audio bend"><Icon w={30} h={26} {...edge}><path d="M1 4L8 10V16L1 22ZM29 9V17L24 16L20 21V5L24 10ZM8 12H20V14H8Z" /><path d="M10 0V26M17 0V26" stroke="#fff" strokeWidth="1.500" strokeDasharray="4 2" /></Icon></Tool>
      <Tool $w={36} aria-label="Quantize panel"><Icon w={20} h={22} {...line}><ellipse cx="9.500" cy="10" rx="8" ry="9" /><path d="M11 13L18 20" /></Icon></Tool>
      <Tool $w={48} aria-label="Macro"><Icon w={28} h={30} {...edge}><path d="M8 1H15L20 5V10H8ZM0 20Q4 14 10 13H18Q24 14 28 20L24 21Q20 18 18 18H10Q8 18 4 21ZM9 22H20L14 30H10Z" /><path d="M12 3V8M15 5V8" stroke="#444" strokeWidth="1" /></Icon></Tool>
      <Gap $w={14} />
      <DarkGroup>
        <Tool $w={44} aria-label="Input quantize"><Value as="b" $size={16}>IQ</Value></Tool>
        <ToolSelect label="Quantize" value="1/16" />
        <ToolSelect label="Timebase" value="Bars" />
        <ToolSelect label="Snap" value="Adaptive" />
        <Tool $w={40} aria-label="Autoscroll"><Icon w={30} h={28}><path d="M0 0H2V28H0Z" /><path d="M12 11H28V17H12Z" {...edge} /><path d="M15 14H24" stroke="#222" strokeWidth="2" /></Icon></Tool>
        <Tool $w={41} aria-label="Cursor follow"><Icon w={22} h={16}><path d="M1 0V16M4 0V16M7 0V16" stroke="#ddd" strokeDasharray="2 1" /><path d="M11 0H21V16H11Z" /><path d="M18 3V13L13 8Z" fill="#222" /></Icon></Tool>
        <Tool $on aria-label="Snap"><Icon w={24} h={28}><path d="M1 10H11V4L20 14L11 24V18H1Z" {...edge} /><path d="M21 0H23V28H21Z" /></Icon></Tool>
        <Tool $w={24} aria-label="Scroll lock"><Icon w={16} h={28}><path d="M7 0H9V28H7ZM5 9V19L0 14ZM11 9V19L16 14Z" /></Icon></Tool>
      </DarkGroup>
      <PageButtons>
        <PageButton $w={61} $left={20} $soft aria-label="Track presets"><Icon w={28} h={24}><path d="M0 0H6V7H0ZM7 0H13V7H7ZM0 8H6V15H0ZM7 8H13V15H7ZM0 16H6V23H0ZM7 16H13V23H7Z" /><path d="M14 0H19V7H14ZM20 0H25V7H20ZM20 16H25V23H20ZM14 16H19V23H14Z" opacity=".5" /><circle cx="21" cy="12" r="6" /><path d="M21 9V15M18 12H24" stroke="#333" /></Icon></PageButton>
        <PageButton $w={20} $soft aria-label="Preset list"><Down w={12} h={9} /></PageButton>
        <PageButton $w={139} $right={68} aria-label="Video"><Icon w={20} h={26}><path d="M0 2H4V0H16V2H20V24H16V26H4V24H0Z" /><path d="M2 4V22M18 4V22" stroke="#333" strokeWidth="2" strokeDasharray="2 2" /><path d="M6 3H14V11H6ZM6 14H14V22H6Z" fill="#444" /></Icon></PageButton>
        <PageButton $w={77}>Start</PageButton>
        <PageButton $w={76}>Song</PageButton>
        <PageButton $w={20} $soft aria-label="Song list"><Down w={12} h={8} /></PageButton>
        <PageButton $w={83}>Project</PageButton>
        <PageButton $w={18} $soft aria-hidden="true" tabIndex={-1} />
        <PageButton $w={82}>Show</PageButton>
        <PageButton $w={19} $soft aria-hidden="true" tabIndex={-1} />
      </PageButtons>
    </Toolbar>

    <Arrange>
      <Split>
        <ListTools>
          <button aria-label="Track list"><Lines /></button>
          <button aria-label="Inspector"><Icon w={14} h={18}><path d="M5 0H9V3.500H5ZM5 6H9V18H5Z" /></Icon></button>
          <button aria-label="Options"><Wrench s={20} /></button>
          <button aria-label="Automation"><Icon w={28} h={18}><path d="M2 16Q4 2 9 3M15 4L20 16L26 3" {...line} /><circle cx="2" cy="16" r="2" /><circle cx="9" cy="2.500" r="2" /><circle cx="20" cy="16" r="2" /><circle cx="14.500" cy="3" r="2" /><circle cx="26" cy="2" r="2" /></Icon></button>
          <Spacer />
          <button aria-label="Global tracks"><Icon w={20} h={16}><path d="M0 0H20V4H0ZM0 6H5V9H0ZM8 6H20V9H8ZM0 12H20V16H0Z" /></Icon></button>
          <button aria-label="Add track"><Icon w={19} h={19}><path d="M7.500 0H11.500V7.500H19V11.500H11.500V19H7.500V11.500H0V7.500H7.500Z" /></Icon></button>
        </ListTools>
        <Ruler>
          {Array.from({ length: 39 }, (_, i) => <Bar key={i}>{i % 2 === 0 ? (i === 38 ? 1 : i * 4 + 1) : ''}</Bar>)}
        </Ruler>
      </Split>
      <Tracks>
        <TrackList>
          <TrackRow number={1} name="Inst" tone={tones.blue} input="Input L+R" output="Inst 1" stereo columns="1470fr 104fr">
            <Clip $column={1} $bg="#0562e0" $wave="#02245a">
              <svg viewBox="0 0 1470 145" preserveAspectRatio="none" fill="currentColor">
                <path d="M0 36.5H1470M0 106.500H1470" stroke="currentColor" strokeOpacity=".5" />
                <path d={instPath(36.5, 1, 77)} />
                <path d={instPath(106.5, 0.85, 431)} />
              </svg>
            </Clip>
          </TrackRow>
          <TrackRow number={2} name="Vox" tone={tones.gray} input="Input L" output="Vox 1" columns={VOX_COLUMNS}>
            {VOX_CLIPS.map((c) => <VoxClip key={c.column} clip={c} muted />)}
          </TrackRow>
          <TrackRow number={3} name="Vox" tone={tones.cyan} input="Input L" output="Vox 1" columns={VOX_COLUMNS}>
            {VOX_CLIPS.map((c) => <VoxClip key={c.column} clip={c} />)}
          </TrackRow>
        </TrackList>
        <ScrollColumn><Up w={10} h={8} /><Thumb /><Down w={10} h={7} /></ScrollColumn>
      </Tracks>
      <ArrangeFoot>
        <FootButton>M</FootButton>
        <FootButton>S</FootButton>
        <FootButton $color="#3b9de8" aria-label="Power"><Icon w={14} h={14}><path d="M4 3A5.500 5.500 0 1 0 10 3M7 0V7" {...line} /></Icon></FootButton>
        <FootButton $plain $w={90}>Medium</FootButton>
        <Spacer />
        <Right /><Spacer $w={15} /><Up w={11} h={9} />
        <Zoom type="range" defaultValue="0" aria-label="Zoom" />
        <Up w={17} h={12} /><Spacer $w={10} />
        <Icon w={21} h={18}><path d="M9 2H17V5H9ZM9 7H17V10H9ZM0 12H6V14H0ZM0 16H6V18H0Z" opacity=".7" /></Icon>
      </ArrangeFoot>
      <Playhead />
    </Arrange>

    <Mixer>
      <SideNav>
        <SideHeader>
          <button aria-label="Close console"><Icon w={13} h={13}><path d="M1.500 1.500L11.500 11.500M11.500 1.500L1.500 11.500" {...line} strokeWidth="3.500" /></Icon></button>
          <button aria-label="Detach"><Icon w={13} h={13}><path d="M2 0H13V11L9 7.500L3 13L0 10L5.500 4Z" /></Icon></button>
        </SideHeader>
        <SideRow>
          <SideButton>I/O</SideButton>
          <SideButton aria-label="I/O list"><Down /></SideButton>
        </SideRow>
        <SideButton aria-label="Console options"><Wrench s={14} /></SideButton>
        <SideGap />
        <SideButton $h={32} aria-label="Height"><Icon w={12} h={22}><path d="M0 8H12L6 0ZM0 13H12L6 22Z" /></Icon></SideButton>
        <SideButton $h={31} aria-label="Width"><Icon w={24} h={12}><path d="M0 0V12L9 6ZM24 0V12L15 6Z" /></Icon></SideButton>
        <SideButton $h={27}>Inputs</SideButton>
        <SideButton>Outputs</SideButton>
        <SideButton $h={27}>External</SideButton>
        <SideButton>Instr.</SideButton>
        <SideButton $h={27} aria-label="Banks"><Icon w={22} h={16}><path d="M.7 6.700H15V15.300H.7ZM4 4.500H17.500V13M7 1.500H21V11" fill="none" stroke="currentColor" strokeWidth="1.500" /><path d="M4.500 7V15M8 7V15M11.500 7V15" stroke="currentColor" strokeWidth="1.500" /></Icon></SideButton>
        <SideButton aria-label="Groups"><Pins w={16} h={15} /></SideButton>
        <SideButton $on $h={27} aria-label="Channel list"><Lines w={21} h={15} /></SideButton>
      </SideNav>

      <ChannelPanel>
        <ChannelTable>
          <thead><tr><th colSpan={3}>Channel</th></tr></thead>
          <tbody>
            {CHANNELS.map((c) => (
              <ChannelRow key={c.number} $selected={c.selected}>
                <td>{c.number}</td>
                <td>
                  <ChannelMarks><Swatch $color="#35373b" /><Dot s={8} /><Sine /><Swatch $color={c.color} /></ChannelMarks>
                </td>
                <td>{c.name}</td>
              </ChannelRow>
            ))}
          </tbody>
        </ChannelTable>
        <Filter placeholder="Filter" aria-label="Filter" />
        <TypeTabs>
          <TypeTab $on aria-label="Audio"><Wave w={16} h={12} /></TypeTab>
          <TypeTab aria-label="Instruments"><Keys /></TypeTab>
          <TypeTab>FX</TypeTab>
          <TypeTab aria-label="Bus"><Bus w={14} h={9} /></TypeTab>
          <TypeTab aria-label="VCA"><Vca w={15} h={12} dim="#5c5e62" /></TypeTab>
          <TypeTab>AUX</TypeTab>
          <TypeTab $wide>Remote</TypeTab>
        </TypeTabs>
      </ChannelPanel>

      <Console>
        <Strips>
          <Strip $w={102} $top="#0562e0" $bg="#213655"><HiddenBody /><StripName $bg="#0562e0" $color="#dfe6ee">Inst</StripName></Strip>
          <Strip $w={233} $top="#17637e" $bg="#45474b"><HiddenBody /><StripName $bg="#0a9edb" $color="#e3f2f8">Vox</StripName></Strip>
          <Strip $top="#00c6ee" $bg="#1e4a52">
            <StripBody>
              <Slot $bg="#42595e">Input L</Slot>
              <Slot $bg="#3b5154">Main</Slot>
              <Pan />
              <Pair $h={29}><span>0dB</span><span>&lt;C&gt;</span></Pair>
              <Buttons $columns="1fr 1fr" $bg="#243f48"><button>M</button><button>S</button></Buttons>
              <Buttons $second $columns="1fr 1fr" $bg="#243f48"><button aria-label="Record"><Dot /></button><button aria-label="Monitor"><Monitor /></button></Buttons>
              <FaderArea>
                <Scale marks={[['10', 19], ['6', 30], ['0', 48], ['-6', 67], ['-12', 82], ['-24', 101], ['-36', 120], ['-48', 132]]} />
                <Fader type="range" defaultValue="94" aria-label="Vox level" $track="#4a6b72" $cap={WHITE_CAP} />
                <FaderIcons>
                  <Icon w={16} h={15} fill="#4c5558"><path d="M0 0H16V4.500H0ZM0 5.500H16V9.500H0ZM0 10.500H16V15H0Z" /></Icon>
                  <Panes dim="#5b767c" />
                  <Knob />
                </FaderIcons>
              </FaderArea>
              <StripFoot><b>3</b><Wave /></StripFoot>
              <AutoMode $bg="#1d3338">Auto: Off</AutoMode>
            </StripBody>
            <StripName $bg="#00c6ee" $color="#0b2a30">Vox</StripName>
          </Strip>
        </Strips>
        <ScrollRow><Left w={7} h={10} /><Right w={7} h={10} /></ScrollRow>
      </Console>

      <Console>
        <Strip $top="#3f4348" $bg="#303338">
          <StripBody>
            <Slot $bg="#2d3034" aria-label="Insert" />
            <Slot $bg="#45474a">Front L/R +</Slot>
            <Pair $bg="#222427" $color="#3b9fd0"><span>-∞</span><span>-∞</span></Pair>
            <Pair $h={29}><span>0dB</span><Faint>0</Faint></Pair>
            <Buttons $columns="1fr 1fr" $bg="#2e3135"><button>M</button><button>S</button></Buttons>
            <Buttons $second $columns="32px 20px 1fr" $bg="#2e3135">
              <BlueButton aria-label="Metronome"><MetronomeIcon /></BlueButton>
              <button aria-label="Fader mode"><FaderIcon /></button>
              <button aria-label="Stereo"><Stereo /></button>
            </Buttons>
            <FaderArea $main>
              <FaderIcons $main>
                <Icon w={16} h={15} fill="#4c4e51"><path d="M0 0H15V4H0Z" fill="#62b9ea" /><path d="M0 5.500H15V9.500H0ZM0 10.500H7V15H0ZM8 10.500H15V15H8Z" /></Icon>
                <Panes dim="#606266" />
                <Knob />
              </FaderIcons>
              <Fader type="range" defaultValue="94" aria-label="Main level" $track="#595b5f" $cap={BLUE_CAP} />
              <Scale main marks={[['6', 20], ['-3', 34], ['-9', 47], ['-24', 77], ['-36', 101], ['-48', 124], ['-60', 146]]} />
            </FaderArea>
            <StripFoot />
            <AutoMode $bg="#232528">Auto: Off</AutoMode>
          </StripBody>
          <StripName $bg="#1f2123" $color="#f1f1f1">Main</StripName>
        </Strip>
      </Console>
    </Mixer>

    <Transport>
      <TransportPanel>
        <Readout $w={44} $gap={8}>
          <Icon w={34} h={18}><path d="M0 5V13L5 9ZM29 5V13L34 9Z" opacity=".6" /><circle cx="17" cy="9" r="8" fill="none" stroke="currentColor" /><circle cx="17" cy="9" r="5" fill="none" stroke="currentColor" strokeWidth="2.500" strokeDasharray="2 2.500" /></Icon>
          MIDI
        </Readout>
        <Readout $w={84} $gap={18}><Meter $w={82} />Performance</Readout>
        <Icon w={30} h={30}><circle cx="15" cy="15" r="13" fill="none" stroke="#aaa" strokeWidth="3" strokeLinecap="round" strokeDasharray="0 6.800" /></Icon>
        <Spacer $w={15} />
        <Readout $w={101} $align="start"><Value>8:19 days</Value>Record Max</Readout>
        <Readout $w={172} $gap={22}><Clock>00009.04.02.95</Clock><BarsMode>Bars<Down w={9} h={7} /></BarsMode></Readout>
        <TransportButtons $gap={15} $after={28}>
          <button aria-label="Step back"><Left w={12} h={15} /></button>
          <button aria-label="Rewind"><Icon w={22} h={15}><path d="M11 0V15L0 7.500ZM22 0V15L11 7.500Z" /></Icon></button>
          <button aria-label="Forward"><Icon w={22} h={15}><path d="M0 0V15L11 7.500ZM11 0V15L22 7.500Z" /></Icon></button>
          <button aria-label="Step forward"><Right w={13} h={15} /></button>
          <button aria-label="Return to zero"><Icon w={15} h={16}><path d="M0 0H2V16H0ZM15 0V16L3 8Z" /></Icon></button>
        </TransportButtons>
        <TransportButtons $gap={20} $after={25}>
          <button aria-label="Stop"><Icon w={25} h={25} fill="#2fb1dc"><path d="M0 0H25V25H0Z" /></Icon></button>
          <button aria-label="Play"><Right w={22} h={25} /></button>
          <button aria-label="Record"><Dot s={25} /></button>
          <button aria-label="Loop"><Icon w={40} h={26}><path d="M18 24Q23 20 24 14M11 24Q2 22 2 12T12 2H28Q38 2 38 12T28 24H22M11 24Q16 22 17 14" {...line} strokeWidth="2.500" /></Icon></button>
        </TransportButtons>
        <Locators><b>L</b><span>00001.01.01.00</span><b>R</b><span>00001.01.01.00</span></Locators>
        <Readout $w={44} $gap={12}><Value>Off</Value>Sync</Readout>
        <SmallIcons>
          <Icon w={20} h={10}><path d="M0 2H7L12 8H20M10 5H20" fill="none" stroke="currentColor" strokeWidth="1.500" /></Icon>
          <Icon w={20} h={12}><path d="M1 0V12" stroke="currentColor" strokeWidth="1.500" /><path d="M3 5H5V7H3ZM6 0H8V3H18V9H8V12H6Z" /></Icon>
          <Icon w={14} h={14}><circle cx="7" cy="7" r="4" fill="none" stroke="currentColor" strokeWidth="2.500" /><circle cx="7" cy="7" r="6" fill="none" stroke="currentColor" strokeWidth="2" strokeDasharray="2.300 2.400" /></Icon>
          <Icon w={22} h={12}><path d="M5 0H7V3H15V0H17V12H15V9H7V12H5ZM0 6H4V7.500H0ZM18 6H22V7.500H18Z" /></Icon>
        </SmallIcons>
        <Readout $w={72} $gap={18}><IconRow><Dot /><Wrench s={13} /><MetronomeIcon w={14} h={13} /></IconRow>Metronome</Readout>
        <Readout $w={46} $gap={18}><Value>4 / 4</Value>Timing</Readout>
        <Readout $w={30} $gap={18}><Value>-</Value>Key</Readout>
        <Readout $w={52} $gap={20}><Value>120.00</Value>Tempo</Readout>
        <Readout $w={112} $align="start">
          <Icon w={112} h={12}><path d="M0 0H84V5H0ZM0 7H84V12H0Z" fill="#2b2d33" /><path d="M84 0H112V12H84Z" fill="#1c1d1f" /></Icon>
          <Icon w={114} h={12}>
            <path d="M0 6H62" stroke="#4da6cf" strokeWidth="12" strokeDasharray="2 1" /><path d="M63 6H84" stroke="#2c3237" strokeWidth="12" strokeDasharray="2 1" />
            <g color="#45c0e6"><circle cx="98" cy="6" r="6" fill="#45c0e6" /><circle cx="107" cy="6" r="4.500" {...line} /></g>
          </Icon>
        </Readout>
      </TransportPanel>
      <ViewTabs>
        <ViewTab>Edit</ViewTab>
        <ViewTab $on>Mix</ViewTab>
        <ViewTab>Browse</ViewTab>
      </ViewTabs>
    </Transport>

    <ContextMenu>
      {MENU.map((item, i) =>
        item ? (
          <MenuItem key={i} $on={item[2] === 'on'} disabled={item[2] === 'off'}>
            <i /><span>{item[0]}</span><span>{item[1]}</span>{item[2] === 'sub' && <Right w={5} h={9} />}
          </MenuItem>
        ) : (
          <Separator key={i} />
        )
      )}
      {ICON_MENU.map(([label, icon, key]) => (
        <MenuItem key={label} $tall>{icon}<span>{label}</span><span>{key}</span></MenuItem>
      ))}
    </ContextMenu>
    <Badge $x={202} $y={348}>1</Badge>
    <Badge $x={446} $y={408}>2</Badge>
    <Pointer $x={240} $y={346}>
      <Icon w={24} h={32}>
        <path d="M8 7Q6 4 9 1" fill="none" stroke="#111" strokeWidth="1.500" />
        <rect x="1.500" y="8" width="15" height="22" rx="7" fill="#fff" stroke="#222" />
        <path d="M1.500 18H16.500M9 8V18" stroke="#222" fill="none" /><path d="M11 10H13Q15 12 14.500 16H11Z" stroke="#222" fill="none" />
        <path d="M14 3L16 5M18 3L17 6M19 9L23 10" stroke="#f00" strokeWidth="1.500" />
      </Icon>
    </Pointer>
    <Pointer $x={396} $y={427}>
      <Icon w={18} h={28}><path d="M1 1V21L6 17L9.500 26L13 24.500L9.500 16H16Z" fill="#fff" stroke="#222" /></Icon>
    </Pointer>
  </Page>
)

export default App
